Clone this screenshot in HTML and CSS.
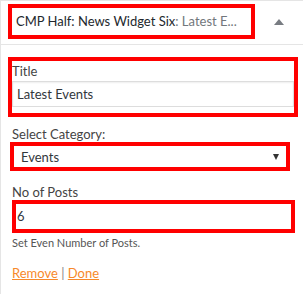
FILE: index.html
```html
<!DOCTYPE html>
<html lang="en">
<head>
    <meta charset="UTF-8">
    <meta name="viewport" content="width=device-width, initial-scale=1.0">
    <title>Widget</title>
    <link rel="stylesheet" href="styles.css">
</head>
<body>
    <div class="widget">
        <div class="widget-top">
            <div class="widget-title mark">CMP Half: News Widget Six<span class="in-title">: Latest E...</span></div>
            <span class="toggle"></span>
        </div>
        <div class="widget-inside">
            <div class="field mark">
                <label>Title</label>
                <div class="input">Latest Events</div>
            </div>
            <label class="label-cat">Select Category:</label>
            <div class="select mark">
                <span>Events</span>
                <span class="caret"></span>
            </div>
            <label class="label-posts">No of Posts</label>
            <div class="input posts mark">6</div>
            <p class="hint">Set Even Number of Posts.</p>
            <div class="actions">
                <a href="#">Remove</a> <span class="sep">|</span> <a href="#">Done</a>
            </div>
        </div>
    </div>
</body>
</html>
```
FILE: styles.css
```css
body {
    margin: 0;
    background-color: #fff;
    color: #444;
    font-family: Lato, "Open Sans", sans-serif;
    font-size: 13px;
}

.widget {
    border-top: 1px solid #e5e5e5;
    border-left: 1px solid #e5e5e5;
    height: 293px;
}

/* highlight boxes */
.mark {
    border: 4px solid #ff0000;
}

.widget-top {
    display: flex;
    align-items: flex-start;
    height: 43px;
    border-bottom: 1px solid #e5e5e5;
}

.widget-title {
    margin: 3px 0 0 7px;
    width: 235px;
    height: 27px;
    line-height: 27px;
    padding-left: 4px;
    color: #23282d;
    white-space: nowrap;
    overflow: hidden;
}

.in-title {
    color: #72777c;
}

.toggle {
    align-self: center;
    margin: 0 19px 2px auto;
    width: 0;
    height: 0;
    border-left: 5px solid transparent;
    border-right: 5px solid transparent;
    border-bottom: 6px solid #787c82;
}

.widget-inside {
    padding: 12px 9px 0 11px;
}

label {
    display: block;
    color: #444;
}

.field {
    margin: 0 -4px;
}

.field label {
    line-height: 20px;
}

.input {
    box-sizing: border-box;
    height: 26px;
    line-height: 24px;
    padding-left: 4px;
    border: 1px solid #ddd;
    box-shadow: inset 0 1px 2px rgba(0, 0, 0, 0.07);
    color: #32373c;
    margin-bottom: 6px;
}

.label-cat {
    margin-top: 9px;
    line-height: 16px;
}

.select {
    display: flex;
    align-items: center;
    justify-content: space-between;
    box-sizing: border-box;
    width: 280px;
    height: 29px;
    margin-left: -2px;
    padding: 0 7px;
    color: #32373c;
}

.caret {
    width: 0;
    height: 0;
    border-left: 3.5px solid transparent;
    border-right: 3.5px solid transparent;
    border-top: 6px solid #333;
}

.label-posts {
    margin-top: 13px;
    line-height: 16px;
}

.input.posts {
    width: calc(100% + 1px);
    height: 33px;
    line-height: 25px;
    padding-left: 1px;
    margin-bottom: 0;
    border: 4px solid #ff0000;
    box-shadow: none;
}

.hint {
    margin: 3px 0 0;
    font-size: 11px;
    line-height: 14px;
    color: #555;
}

.actions {
    margin-top: 14px;
    line-height: 18px;
}

.actions a {
    color: #f7892b;
}

.sep {
    color: #888;
}
```
